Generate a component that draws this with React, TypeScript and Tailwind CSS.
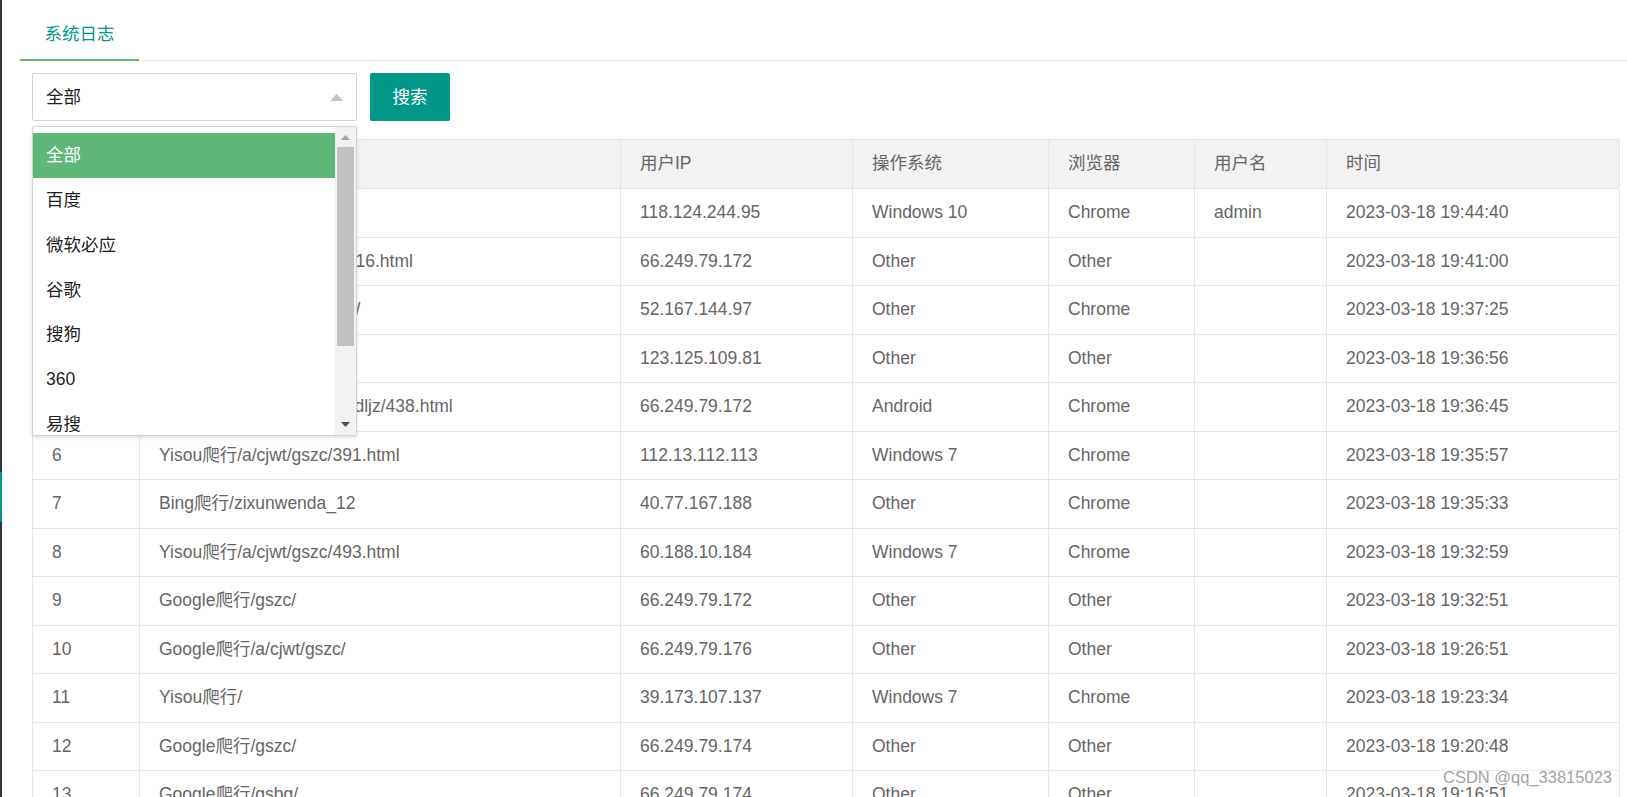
import React from "react";

const FONT = {
  fontFamily:
    '"Liberation Sans", Arial, "Noto Sans CJK SC", sans-serif',
};

type Row = [string, string, string, string, string, string, string];

const rows: Row[] = [
  ["1", "首页/", "118.124.244.95", "Windows 10", "Chrome", "admin", "2023-03-18 19:44:40"],
  ["2", "Google爬行/a/cjwt/gszc/416.html", "66.249.79.172", "Other", "Other", "", "2023-03-18 19:41:00"],
  ["3", "Bing爬行/zixunwenda_12/", "52.167.144.97", "Other", "Chrome", "", "2023-03-18 19:37:25"],
  ["4", "百度爬行/", "123.125.109.81", "Other", "Other", "", "2023-03-18 19:36:56"],
  ["5", "Google爬行/a/cjwt/gszcx/dljz/438.html", "66.249.79.172", "Android", "Chrome", "", "2023-03-18 19:36:45"],
  ["6", "Yisou爬行/a/cjwt/gszc/391.html", "112.13.112.113", "Windows 7", "Chrome", "", "2023-03-18 19:35:57"],
  ["7", "Bing爬行/zixunwenda_12", "40.77.167.188", "Other", "Chrome", "", "2023-03-18 19:35:33"],
  ["8", "Yisou爬行/a/cjwt/gszc/493.html", "60.188.10.184", "Windows 7", "Chrome", "", "2023-03-18 19:32:59"],
  ["9", "Google爬行/gszc/", "66.249.79.172", "Other", "Other", "", "2023-03-18 19:32:51"],
  ["10", "Google爬行/a/cjwt/gszc/", "66.249.79.176", "Other", "Other", "", "2023-03-18 19:26:51"],
  ["11", "Yisou爬行/", "39.173.107.137", "Windows 7", "Chrome", "", "2023-03-18 19:23:34"],
  ["12", "Google爬行/gszc/", "66.249.79.174", "Other", "Other", "", "2023-03-18 19:20:48"],
  ["13", "Google爬行/gsbg/", "66.249.79.174", "Other", "Other", "", "2023-03-18 19:16:51"],
];

const headers = ["ID", "访问页面", "用户IP", "操作系统", "浏览器", "用户名", "时间"];
const options = ["全部", "百度", "微软必应", "谷歌", "搜狗", "360", "易搜"];

function Cell({ children }: { children?: React.ReactNode }) {
  return (
    <div className="flex items-center pb-[1px] px-[19px] border-r border-[#e6e6e6] whitespace-nowrap overflow-hidden">
      {children}
    </div>
  );
}

export default function App() {
  return (
    <div
      className="flex h-[797px] w-full overflow-hidden bg-white text-[17.5px]"
      style={FONT}
    >
      {/* sidebar edge */}
      <div className="w-[2px] shrink-0 flex flex-col bg-[#30333d]">
        <div className="h-[472px]" />
        <div className="h-[50px] bg-[#009688]" />
      </div>

      <div className="flex-1 pl-[18px] relative">
        {/* tab title */}
        <div className="mt-[10px] h-[51px] border-b border-[#e6e6e6] flex">
          <div className="w-[119px] h-[51px] -mb-px border-b-2 border-[#5fb878] flex items-center justify-center text-[#009688]">
            系统日志
          </div>
        </div>

        {/* form row */}
        <div className="mt-[12px] pl-[12px] flex gap-[13px]">
          <div className="relative w-[325px] h-[48px]">
            <div className="h-full border border-[#d2d2d2] rounded-[2px] bg-white flex items-center justify-between pl-[13px] pr-[13px] text-black/90">
              <span>全部</span>
              <svg width="13" height="7" viewBox="0 0 13 7">
                <polygon points="6.5,0 13,7 0,7" fill="#c2c2c2" />
              </svg>
            </div>

            {/* dropdown */}
            <div className="absolute left-0 top-[53px] z-10 w-[325px] h-[310px] border border-[#d2d2d2] rounded-[2px] bg-white shadow-[0_2px_4px_rgba(0,0,0,0.12)] flex overflow-hidden">
              <div className="flex-1 pt-[6px] overflow-hidden">
                {options.map((o, i) => (
                  <div
                    key={o}
                    className={
                      i === 0
                        ? "h-[44.75px] shrink-0 flex items-center pl-[13px] bg-[#5fb878] text-white"
                        : "h-[44.75px] shrink-0 flex items-center pl-[13px] text-black/90"
                    }
                  >
                    {o}
                  </div>
                ))}
              </div>
              <div className="w-[21px] shrink-0 bg-[#f1f1f1] flex flex-col">
                <div className="h-[20px] flex items-center justify-center">
                  <svg width="9" height="5" viewBox="0 0 9 5">
                    <polygon points="4.5,0 9,5 0,5" fill="#a3a3a3" />
                  </svg>
                </div>
                <div className="mx-[2px] h-[199px] bg-[#c1c1c1]" />
                <div className="flex-1" />
                <div className="h-[21px] flex items-center justify-center">
                  <svg width="9" height="5" viewBox="0 0 9 5">
                    <polygon points="0,0 9,0 4.5,5" fill="#505050" />
                  </svg>
                </div>
              </div>
            </div>
          </div>

          <button className="w-[80px] h-[48px] rounded-[2px] bg-[#009688] text-white">
            搜索
          </button>
        </div>

        {/* table */}
        <div className="mt-[18px] ml-[12px] w-[1587px] border-l border-t border-[#e6e6e6] text-[#666]">
          <div className="grid grid-cols-[107px_481px_232px_196px_146px_132px_293px] h-[49px] border-b border-[#e6e6e6] bg-[#f2f2f2]">
            {headers.map((h) => (
              <Cell key={h}>{h}</Cell>
            ))}
          </div>
          {rows.map((r) => (
            <div
              key={r[0]}
              className="grid grid-cols-[107px_481px_232px_196px_146px_132px_293px] h-[48.5px] border-b border-[#e6e6e6] bg-white"
            >
              {r.map((c, i) => (
                <Cell key={i}>{c}</Cell>
              ))}
            </div>
          ))}
        </div>

        {/* watermark */}
        <div className="absolute right-[15px] bottom-[7px] text-[16.5px] text-[#a3a3a3] pointer-events-none">
          CSDN @qq_33815023
        </div>
      </div>
    </div>
  );
}
